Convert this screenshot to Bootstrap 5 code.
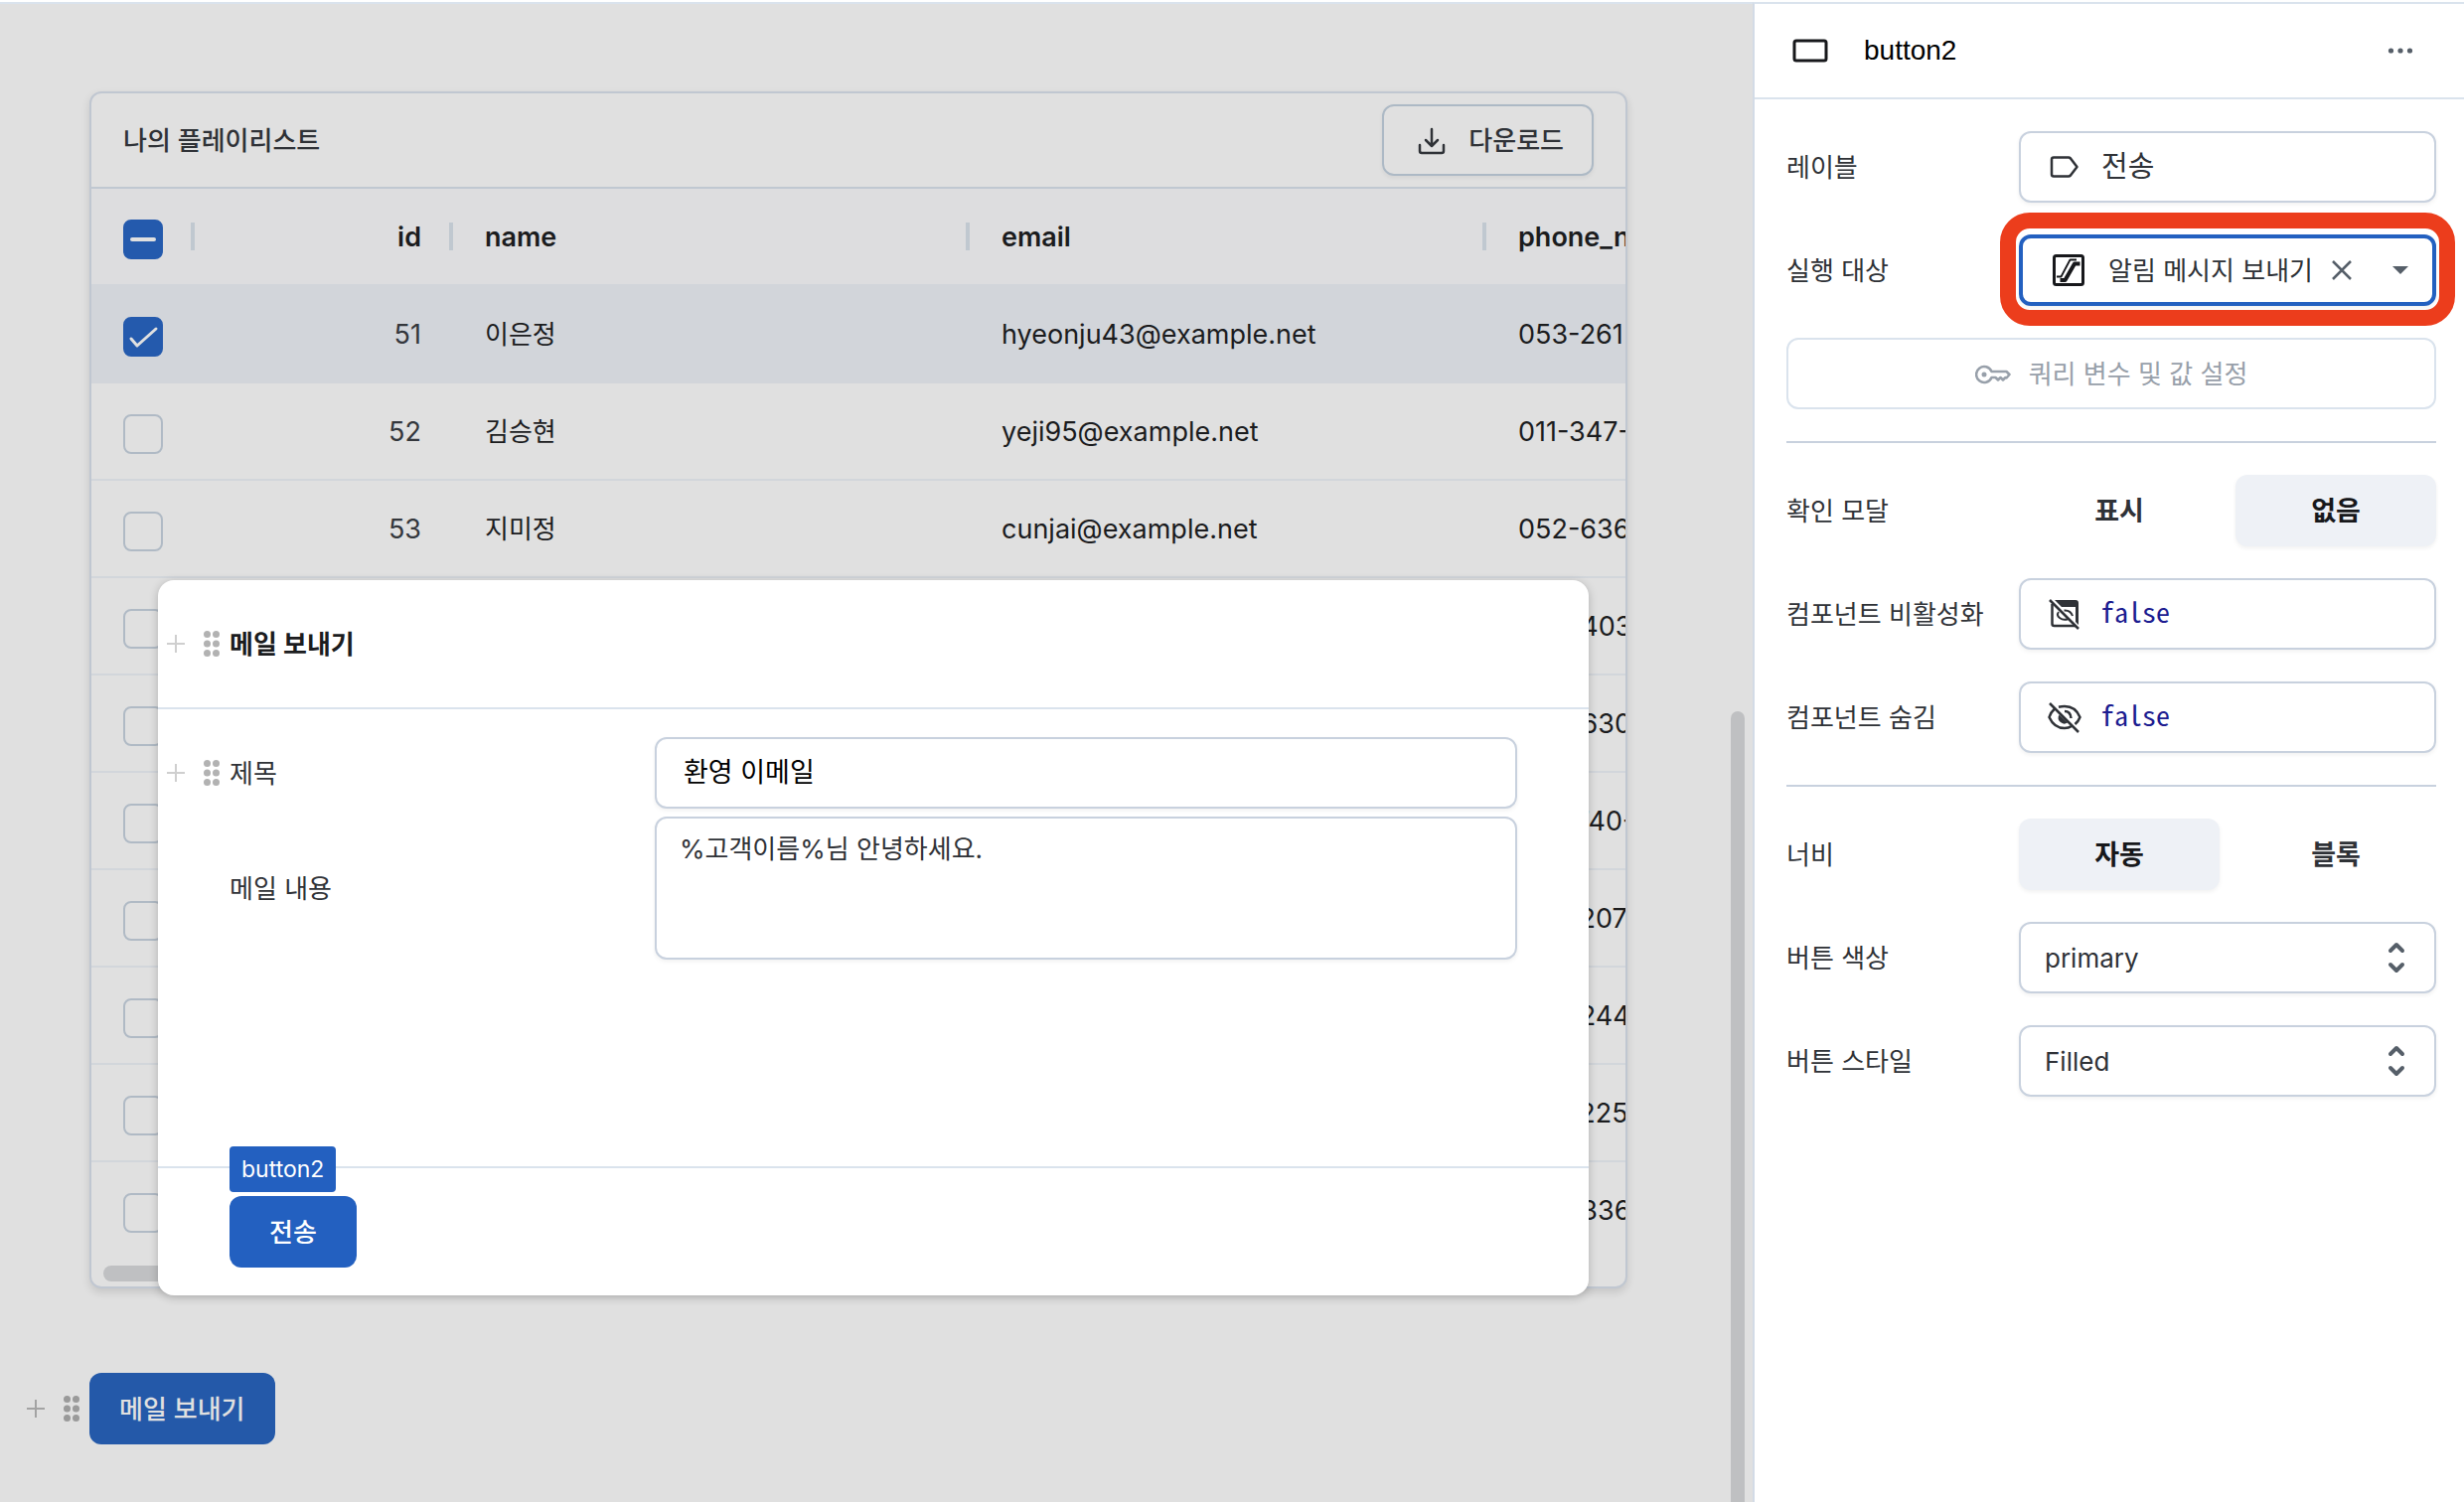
<!DOCTYPE html>
<html lang="ko">
<head>
<meta charset="utf-8">
<meta name="viewport" content="width=device-width, initial-scale=1">
<title>button2</title>
<link href="https://cdn.jsdelivr.net/npm/bootstrap@5.3.0/dist/css/bootstrap.min.css" rel="stylesheet">
<style>
:root{--ink:#2f3237;--field:#c8d1de;--soft:#dae3ed;--blue:#2360c0}
body{font-family:Inter,"Noto Sans CJK KR",sans-serif;font-size:26px;line-height:40px;color:var(--ink);background:#fff;overflow:hidden}
svg{display:block;flex:none}
label,.lbl,.list-title,.dialog-title{padding-top:2px}
.stage{background:#e0e0e0;border-top:2px solid var(--soft);padding:88px 126px 58px 90px}
.canvas{min-width:0;padding-top:2px}
.list-box{border:2px solid #c0c7d1;border-radius:12px;background:#e0e0e0;box-shadow:0 4px 8px rgba(0,0,0,.12);overflow:hidden}
.list-head{height:96px;padding:0 32px;border-bottom:2px solid #c0c8d1}
.btn-tall{height:72px;border-radius:12px;font-size:26px;line-height:40px;font-weight:500;padding:2px 29px 0}
.btn-down{border:2px solid #adb9c5;color:var(--ink);gap:23px;padding:2px 28px 0 34px;box-shadow:0 2px 4px rgba(0,0,0,.06)}
.grid-table{table-layout:fixed;width:2024px;border-collapse:separate;border-spacing:0;font-size:27px;color:#1b1c1e}
.grid-table th,.grid-table td{height:98px;padding:2px 32px 0;vertical-align:middle;white-space:nowrap;border-bottom:2px solid #d2d6db}
.grid-table thead th{background:#dddddf;border-color:#d2d5da;font-weight:600;position:relative}
.grid-table thead th::after{content:"";position:absolute;right:0;top:34px;width:4px;height:28px;background:#c0c8d0}
.grid-table .picked td{background:#d2d5da;border-color:#d2d5da}
.grid-table tbody tr:last-child td{border-color:transparent}
.grid-table .num{color:#34373c}
.grid-table .ko{font-size:26px}
.form-check-input.tick{width:40px;height:40px;margin:4px 0 0;border:2px solid #b0bac5;border-radius:8px;background-color:transparent;float:none;display:block}
.form-check-input.tick:checked,.form-check-input.tick:indeterminate{background-color:#245aad;border-color:#245aad;background-size:36px 36px}
.form-check-input.tick:checked{background-image:url("data:image/svg+xml,%3Csvg xmlns='http://www.w3.org/2000/svg' viewBox='0 0 36 36'%3E%3Cpath d='M6 20l6 7L31 10' fill='none' stroke='%23e0e0e0' stroke-width='3' stroke-linecap='round' stroke-linejoin='round'/%3E%3C/svg%3E")}
.form-check-input.tick:indeterminate{background-image:url("data:image/svg+xml,%3Csvg xmlns='http://www.w3.org/2000/svg' viewBox='0 0 36 36'%3E%3Cpath d='M7 18H29' stroke='%23e0e0e0' stroke-width='4' stroke-linecap='round'/%3E%3C/svg%3E")}
.h-bar{height:16px;width:900px;margin:6px 12px 5px;border-radius:8px;background:#bfc0c2}
.v-bar{right:8px;top:716px;bottom:0;width:14px;border-radius:7px 7px 0 0;background:#bfc0c2}
.grips{gap:18px;right:100%;top:50%;transform:translateY(-50%);padding-right:10px}
.mail-wrap{margin-top:85px}
.btn-mail,.btn-mail:hover{background:#2459a9;color:#e0e0e0}
.dialog-box{left:159px;right:165px;top:584px;height:720px;border-radius:16px;background:#fff;box-shadow:0 2px 10px rgba(0,0,0,.22)}
.dialog-head{height:130px;padding-left:72px;border-bottom:2px solid var(--soft);color:#1b1c1e}
.dialog-main{padding:28px 72px 0}
.dialog-foot{height:130px;padding:28px 72px 0;border-top:2px solid var(--soft)}
.dialog-main .name-col{width:428px}
.dialog-main .form-control{border:2px solid var(--field);border-radius:12px;font-size:26px;box-shadow:0 2px 4px rgba(0,0,0,.06);resize:none}
.dialog-main input.form-control{height:72px;color:#000;padding:0 27px 6px;font-size:27px}
.dialog-main textarea.form-control{height:144px;color:var(--ink);padding:11px 23px}
.btn-send,.btn-send:hover{background:var(--blue);color:#fff;padding-left:39px;padding-right:39px}
.tag-name{bottom:calc(100% + 4px);left:0;height:46px;padding:0 12px;border-radius:4px;background:var(--blue);color:#fff;font-size:23px;line-height:46px}
.side{width:716px;border-left:2px solid #d3dbe6;border-top:2px solid var(--soft);margin-top:2px;background:#fff}
.side-head{height:96px;padding:0 50px 0 38px;border-bottom:2px solid var(--soft);font-family:"Liberation Sans",sans-serif;font-size:28px;color:#000;gap:36px}
.side-body{padding:32px 28px 32px 32px;gap:32px}
.side-body .row-line{height:72px}
.side-body .row-line>label,.side-body .row-line>.lbl{width:234px;white-space:nowrap}
.side-body .cell{width:420px}
.side-body .form-control,.side-body .form-select{height:72px;border:2px solid var(--field);border-radius:12px;font-size:26px;color:var(--ink);box-shadow:0 2px 4px rgba(0,0,0,.06);background-color:#fff}
.side-body .form-select{padding:0 60px 0 24px;background-image:url("data:image/svg+xml,%3Csvg xmlns='http://www.w3.org/2000/svg' viewBox='0 0 20 32'%3E%3Cpath d='M4 9l6-6 6 6M4 23l6 6 6-6' fill='none' stroke='%23565f69' stroke-width='4' stroke-linecap='round' stroke-linejoin='round'/%3E%3C/svg%3E");background-size:20px 32px;background-position:right 28px center}
.side-body .form-control{padding:0 20px 6px 80px}
.side-body .form-control.code{font-family:"Noto Sans Mono CJK KR","DejaVu Sans Mono",monospace;font-size:28px;color:#1c1c90}
.side-body .form-control.big{font-size:29px;padding-left:81px}
.lead-ico{left:28px;top:18px;pointer-events:none}
.side-body .form-control.target{border:4px solid var(--blue);padding:0 20px 4px 86px}
.ring{inset:-22px -19px -20px;border:16px solid #ec3d1c;border-radius:30px;pointer-events:none}
.x-btn{right:81px;top:22px;width:28px;height:28px;border:0;padding:0;background:none}
.caret{right:28px;top:32px;border:8px solid transparent;border-top-color:#565f69;border-bottom:0}
.btn-query,.btn-query:disabled{border:2px solid var(--soft);background:#fff;color:#98a0aa;opacity:1;font-weight:400;gap:18px}
.side-body hr{margin:0;border-top:2px solid var(--field);opacity:1}
.seg{gap:16px}
.seg .btn{flex:1;color:var(--ink);border:0;font-weight:600;font-size:27px}
.seg .btn.active{background:#eef1f6;color:#17181b;box-shadow:0 2px 4px rgba(0,0,0,.06)}
</style>
</head>
<body>
<svg width="0" height="0" class="position-absolute" aria-hidden="true"><defs>
<symbol id="plus" viewBox="0 0 20 20"><path d="M10 1V19M1 10H19" stroke="currentColor" stroke-width="2"/></symbol>
<symbol id="dots" viewBox="0 0 16 26"><g fill="currentColor"><circle cx="3.500" cy="3.500" r="3.500"/><circle cx="12.500" cy="3.500" r="3.500"/><circle cx="3.500" cy="13" r="3.500"/><circle cx="12.500" cy="13" r="3.500"/><circle cx="3.500" cy="22.500" r="3.500"/><circle cx="12.500" cy="22.500" r="3.500"/></g></symbol>
</defs></svg>
<div class="d-flex min-vh-100">
<main class="canvas flex-grow-1 position-relative">
<div class="stage min-vh-100">
<section class="list-box">
<div class="list-head d-flex align-items-center justify-content-between">
<span class="list-title fw-medium">나의 플레이리스트</span>
<button class="btn btn-tall btn-down d-flex align-items-center" type="button"><svg width="28" height="28" viewBox="0 0 28 28" fill="none" stroke="currentColor" stroke-width="2.500" stroke-linecap="round" stroke-linejoin="round"><path d="M14 2V18M8 13l6 6 6-6M2 18v6q0 2 2 2h20q2 0 2-2v-6"/></svg>다운로드</button>
</div>
<table class="grid-table">
<colgroup><col style="width:104px"><col style="width:260px"><col style="width:520px"><col style="width:520px"><col style="width:620px"></colgroup>
<thead><tr><th><input class="form-check-input tick" type="checkbox" id="all" aria-label="모두 선택"></th><th class="text-end">id</th><th>name</th><th>email</th><th>phone_number</th></tr></thead>
<tbody id="rows"></tbody>
</table>
<div class="h-bar"></div>
</section>
<div class="mail-wrap position-relative d-inline-block">
<button class="btn btn-tall btn-mail d-block" type="button">메일 보내기</button>
<div class="grips position-absolute d-flex align-items-center"><svg width="20" height="20" color="#a3a3a3"><use href="#plus"/></svg><svg width="16" height="26" color="#9a9a9a"><use href="#dots"/></svg></div>
</div>
</div>
<div class="v-bar position-absolute"></div>
<section class="dialog-box position-absolute d-flex flex-column" role="dialog" aria-label="메일 보내기">
<div class="dialog-head d-flex align-items-center fw-bold"><span class="dialog-title position-relative">메일 보내기<span class="grips position-absolute d-flex align-items-center"><svg width="20" height="20" color="#cfcfcf"><use href="#plus"/></svg><svg width="16" height="26" color="#b2b2b2"><use href="#dots"/></svg></span></span></div>
<div class="dialog-main flex-grow-1 d-flex flex-column gap-2">
<div class="d-flex align-items-center"><label class="name-col position-relative" for="subject">제목<span class="grips position-absolute d-flex align-items-center"><svg width="20" height="20" color="#cfcfcf"><use href="#plus"/></svg><svg width="16" height="26" color="#b2b2b2"><use href="#dots"/></svg></span></label><input id="subject" class="form-control flex-fill w-auto" value="환영 이메일"></div>
<div class="d-flex align-items-center"><label class="name-col" for="content">메일 내용</label><textarea id="content" class="form-control flex-fill w-auto">%고객이름%님 안녕하세요.</textarea></div>
</div>
<div class="dialog-foot"><div class="position-relative d-inline-block"><span class="tag-name position-absolute">button2</span><button class="btn btn-tall btn-send" type="button">전송</button></div></div>
</section>
</main>
<aside class="side flex-shrink-0">
<header class="side-head d-flex align-items-center">
<svg width="36" height="24" viewBox="0 0 36 24"><rect x="2" y="2" width="32" height="20" rx="2" fill="none" stroke="#17181b" stroke-width="3"/></svg>
<span class="flex-grow-1">button2</span>
<button class="btn p-0 border-0" type="button" aria-label="더 보기"><svg width="28" height="28" viewBox="0 0 28 28" fill="#565f69"><circle cx="4.500" cy="14" r="2.600"/><circle cx="14" cy="14" r="2.600"/><circle cx="23.500" cy="14" r="2.600"/></svg></button>
</header>
<div class="side-body d-flex flex-column">
<div class="row-line d-flex align-items-center"><label for="lab">레이블</label><div class="cell position-relative"><input id="lab" class="form-control big" value="전송"><svg class="lead-ico position-absolute" width="36" height="36" viewBox="0 0 36 36"><path d="M7 8.500H22q1 0 2 1L30.500 18 24 26.500q-1 1-2 1H7q-2 0-2-2V10.500q0-2 2-2Z" fill="none" stroke="#2f3237" stroke-width="2.500" stroke-linejoin="round"/></svg></div></div>
<div class="row-line d-flex align-items-center"><label for="tgt">실행 대상</label><div class="cell position-relative"><input id="tgt" class="form-control target" value="알림 메시지 보내기"><svg class="lead-ico position-absolute ms-1" width="36" height="36" viewBox="0 0 36 36"><g fill="none" stroke="#17181b" stroke-linejoin="round"><rect x="3.500" y="3.500" width="29" height="29" rx="2" stroke-width="3"/><path d="M9.500 28H14.500L24 11.500H29.500" stroke-width="4"/><path d="M6 24.500H10.500L19.500 7.500H26" stroke-width="1.800"/></g></svg><button class="x-btn position-absolute" type="button" aria-label="지우기"><svg width="28" height="28" viewBox="0 0 28 28"><path d="M5 5L23 23M23 5L5 23" stroke="#565f69" stroke-width="2.500"/></svg></button><span class="caret position-absolute"></span><div class="ring position-absolute"></div></div></div>
<button class="btn btn-tall btn-query d-flex align-items-center justify-content-center" type="button" disabled><svg width="36" height="20" viewBox="0 0 36 20" fill="none" stroke="currentColor" stroke-width="2.500" stroke-linejoin="round"><path d="M16.500 7A8 8 0 1 0 16.500 13H20.500l2.500 2.500 2.500-2.500 2.500 2.500 2.500-2.500 1 .5 3-3.500-3-3Z"/><circle cx="9" cy="10" r="2.500" fill="currentColor" stroke="none"/></svg>쿼리 변수 및 값 설정</button>
<hr>
<div class="row-line d-flex align-items-center"><span class="lbl">확인 모달</span><div class="cell seg d-flex"><button class="btn btn-tall" type="button">표시</button><button class="btn btn-tall active" type="button">없음</button></div></div>
<div class="row-line d-flex align-items-center"><label for="dis">컴포넌트 비활성화</label><div class="cell position-relative"><input id="dis" class="form-control code" value="false"><svg class="lead-ico position-absolute" width="36" height="36" viewBox="0 0 36 36"><path d="M5.500 8V28q0 2 2 2H29" fill="none" stroke="#2f3237" stroke-width="2.500"/><path d="M8 4H29q3 0 3 3V29l-3-3V11H15Z" fill="#2f3237"/><path d="M3 4L32 33" stroke="#2f3237" stroke-width="2.500"/><path d="M12 16q-2.500 3.500 1 6 4 3 8.500 1M17.500 14.500q6.500-.5 8.500 5.500" fill="none" stroke="#2f3237" stroke-width="2"/></svg></div></div>
<div class="row-line d-flex align-items-center"><label for="hid">컴포넌트 숨김</label><div class="cell position-relative"><input id="hid" class="form-control code" value="false"><svg class="lead-ico position-absolute" width="36" height="36" viewBox="0 0 36 36"><g fill="none" stroke="#2f3237" stroke-width="2.500"><path d="M8 9.500Q4 13 2.500 18q5 11 15.500 11 4 0 7-2M12 7.800Q15 7 18 7q11 0 15.500 11-1.500 4-5 7"/><path d="M18 12q6 0 6.500 7"/><path d="M3 4L32 33"/></g><path d="M12.500 15.500a6 6 0 0 0 8.500 8Z" fill="#2f3237"/></svg></div></div>
<hr>
<div class="row-line d-flex align-items-center"><span class="lbl">너비</span><div class="cell seg d-flex"><button class="btn btn-tall active" type="button">자동</button><button class="btn btn-tall" type="button">블록</button></div></div>
<div class="row-line d-flex align-items-center"><label for="col">버튼 색상</label><div class="cell"><select id="col" class="form-select"><option>primary</option></select></div></div>
<div class="row-line d-flex align-items-center"><label for="sty">버튼 스타일</label><div class="cell"><select id="sty" class="form-select"><option>Filled</option></select></div></div>
</div>
</aside>
</div>
<script src="https://cdn.jsdelivr.net/npm/bootstrap@5.3.0/dist/js/bootstrap.bundle.min.js"></script>
<script>
const people=[[51,'이은정','hyeonju43@example.net','053-261'],[52,'김승현','yeji95@example.net','011-347-'],[53,'지미정','cunjai@example.net','052-636'],[54,'','','042-403'],[55,'','','043-630'],[56,'','','041-740-'],[57,'','','052-207'],[58,'','','062-244'],[59,'','','055-225'],[60,'','','064-336']];
document.getElementById('rows').innerHTML=people.map((p,i)=>`<tr class="${i?'':'picked'}"><td><input class="form-check-input tick" type="checkbox" aria-label="${p[0]}" ${i?'':'checked'}></td><td class="num text-end">${p[0]}</td><td class="ko">${p[1]}</td><td>${p[2]}</td><td>${p[3]}</td></tr>`).join('');
document.getElementById('all').indeterminate=true;
</script>
</body>
</html>
